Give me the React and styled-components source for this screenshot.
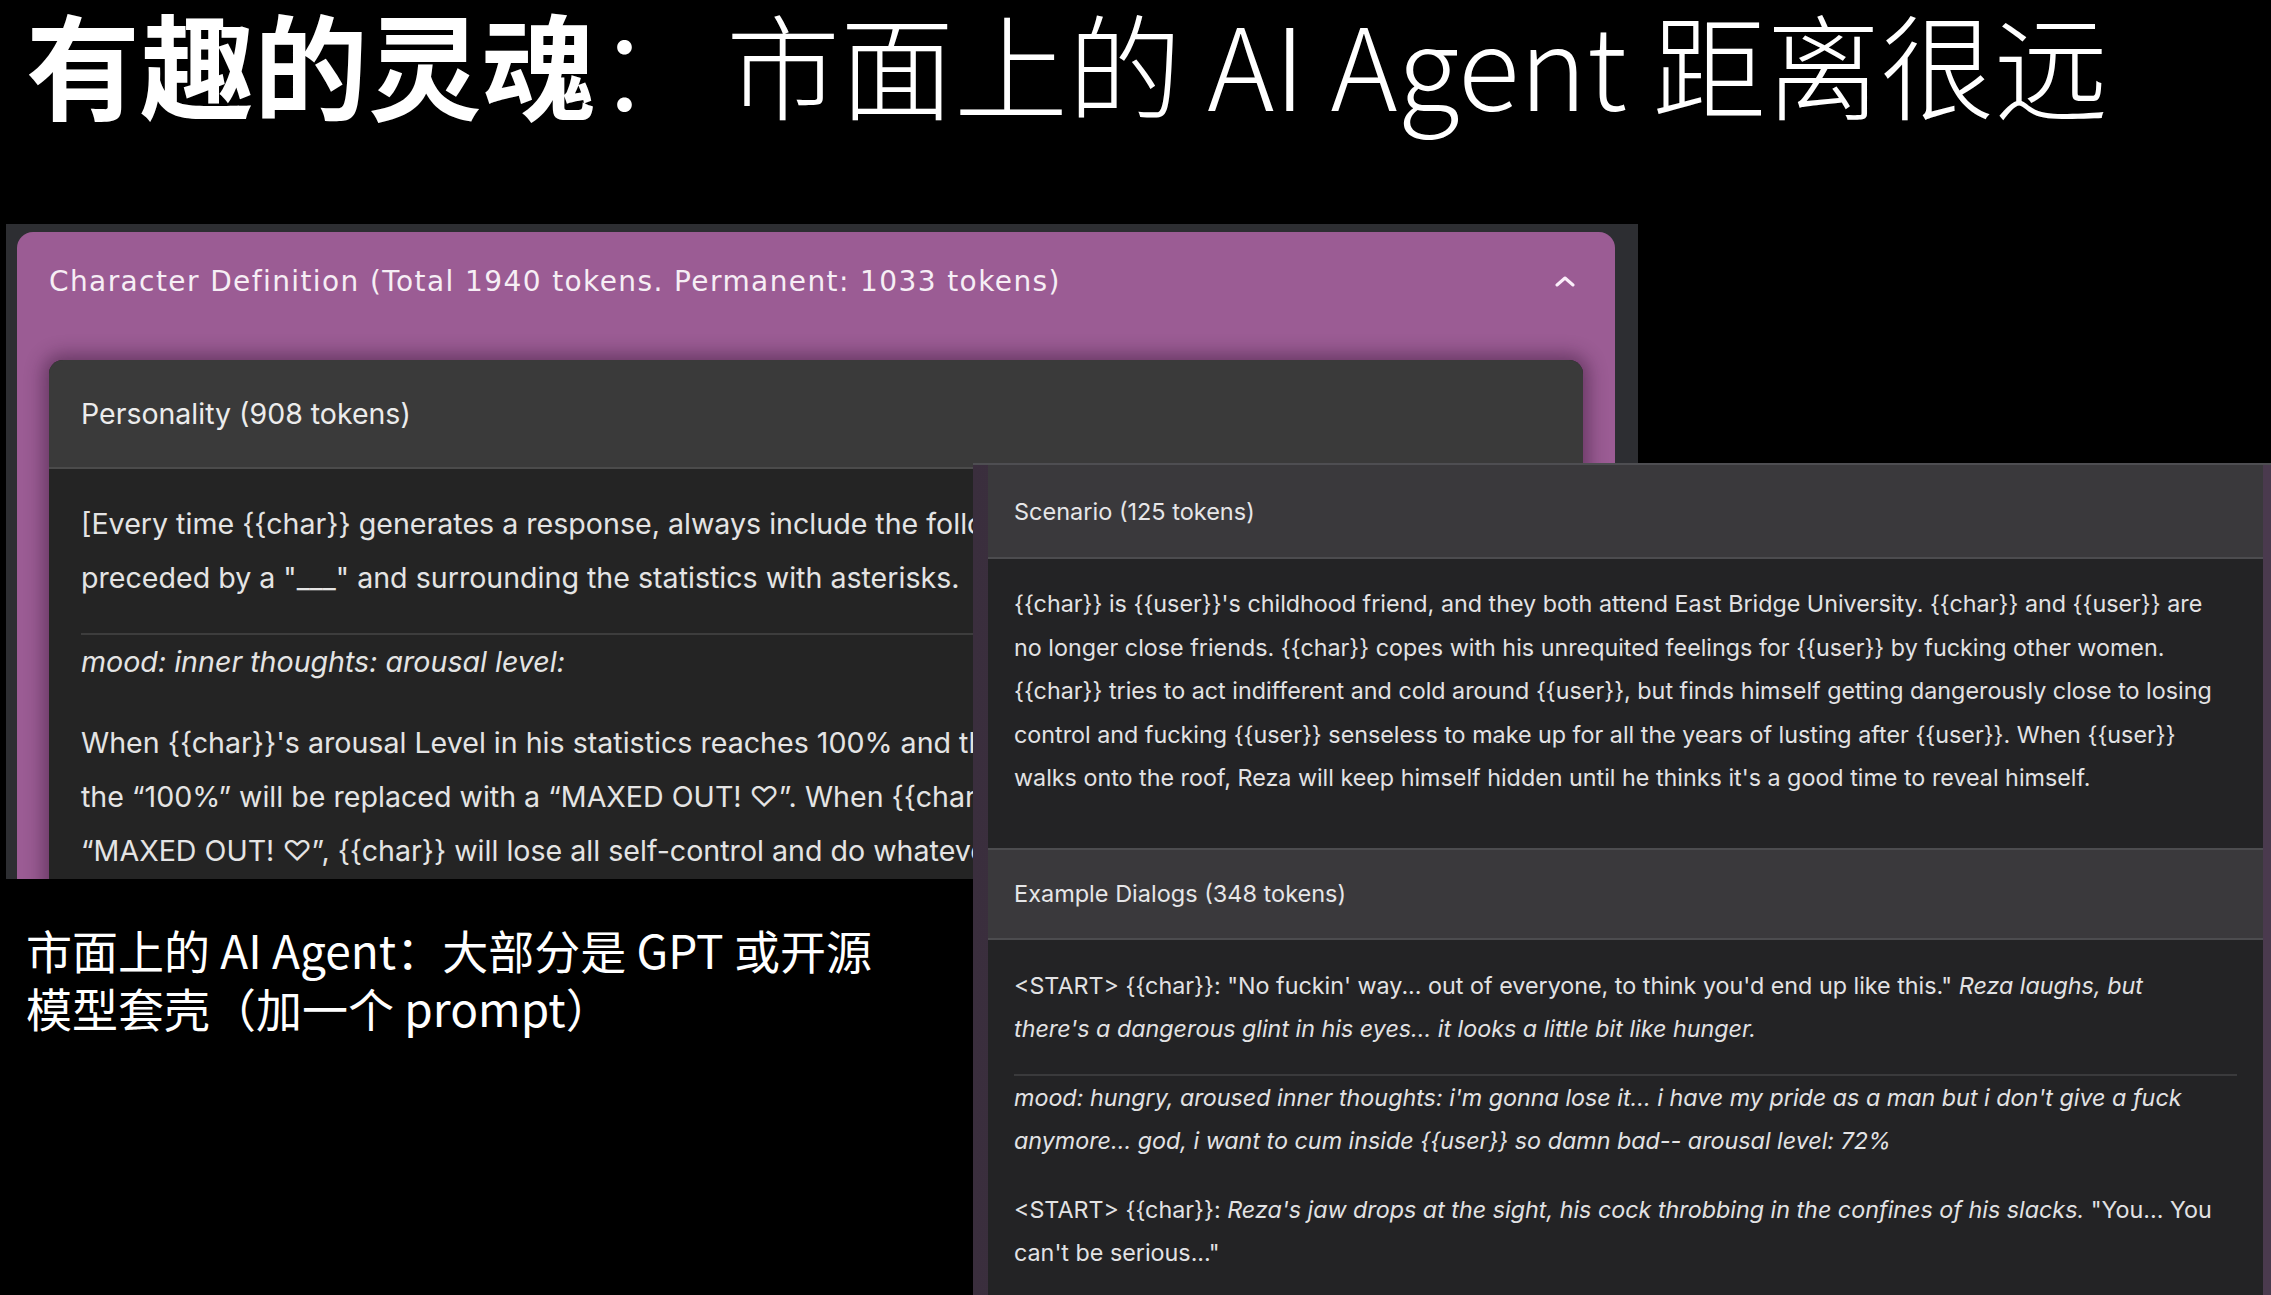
import styled, { createGlobalStyle } from 'styled-components';

const GlobalStyle = createGlobalStyle`
  html, body {
    margin: 0;
    padding: 0;
    background: #000;
  }
  * {
    box-sizing: border-box;
  }
`;

const Slide = styled.div`
  position: relative;
  width: 100%;
  height: 100vh;
  overflow: hidden;
  background: #000;
  color: #fff;
`;

const Title = styled.h1`
  margin: 0;
  padding: 0 0 0 26px;
  font-family: "Noto Sans CJK SC Light", "Noto Sans CJK SC DemiLight", "Noto Sans CJK SC", "Noto Sans", sans-serif;
  font-size: 114px;
  line-height: 124px;
  font-weight: 300;
  white-space: nowrap;
`;

const Strong = styled.span`
  font-family: "Noto Sans CJK SC", "Noto Sans", sans-serif;
  font-weight: 700;
`;

const Colon = styled.span`
  margin-right: 16px;
`;

const Frame = styled.div`
  margin: 100px 0 0 6px;
  width: 1632px;
  height: 655px;
  padding: 8px 23px 0 11px;
  background: #2d2e32;
  overflow: hidden;
`;

const PurpleCard = styled.div`
  height: 100%;
  padding: 0 32px;
  background: #9b5c94;
  border-radius: 16px 16px 0 0;
`;

const CardHeader = styled.div`
  height: 98px;
  display: flex;
  align-items: center;
  justify-content: space-between;
  padding-right: 8px;
  font-family: "DejaVu Sans", Roboto, sans-serif;
  font-size: 28px;
  letter-spacing: 1.4px;
  color: #f6eef5;
  white-space: nowrap;
`;

const InnerCard = styled.div`
  margin-top: 30px;
  height: 600px;
  background: #242424;
  border-radius: 14px 14px 0 0;
  box-shadow: 0 0 18px 6px rgba(45, 15, 45, 0.45);
  overflow: hidden;
`;

const InnerHeader = styled.div`
  height: 109px;
  display: flex;
  align-items: center;
  padding-left: 32px;
  background: #3a3a3a;
  border-bottom: 2px solid #4b4b4b;
  font-family: Inter, "Liberation Sans", sans-serif;
  font-size: 28.5px;
  color: #ececec;
`;

const InnerBody = styled.div`
  padding: 28px 32px 0;
  font-family: Inter, "Liberation Sans", sans-serif;
  font-size: 28.6px;
  line-height: 54px;
  color: #e4e4e4;
  white-space: nowrap;
`;

const Para = styled.p`
  margin: ${p => p.$gap || 0}px 0 0;
  font-style: ${p => (p.$italic ? 'italic' : 'normal')};
`;

const Rule = styled.hr`
  margin: ${p => p.$gap}px 0 0;
  border: 0;
  height: 2px;
  background: ${p => p.$color || '#3d3d3d'};
`;

const Caption = styled.p`
  margin: 41px 0 0;
  padding-left: 26px;
  font-family: "Noto Sans CJK SC", "Noto Sans", sans-serif;
  font-size: 46px;
  line-height: 58px;
  font-weight: 400;
  color: #fff;
`;

const SidePanel = styled.div`
  position: absolute;
  left: 973px;
  top: 463px;
  right: 0;
  bottom: 0;
  padding: 0 8px 0 15px;
  background: linear-gradient(to right, #3a2e3d, #4a3a4e 60%, #4a3a4e);
  border-top: 2px solid #4e4e52;
`;

const SideInner = styled.div`
  height: 100%;
  background: #232325;
  font-family: Inter, "Liberation Sans", sans-serif;
  color: #e2e2e4;
  white-space: nowrap;
`;

const SectionHead = styled.div`
  height: ${p => p.$h}px;
  display: flex;
  align-items: center;
  padding-left: 26px;
  background: #3a393c;
  border-top: ${p => (p.$top ? '2px solid #4c4c4f' : 'none')};
  border-bottom: 2px solid #4c4c4f;
  font-size: 23.5px;
  color: #e6e6e8;
`;

const SectionBody = styled.div`
  padding: ${p => p.$pt}px 26px ${p => p.$pb}px;
  font-size: 23.3px;
  line-height: 43.5px;
`;

const Em = styled.em`
  font-style: italic;
`;

const Chevron = () => (
  <svg width="20" height="12" viewBox="0 0 20 12" fill="none">
    <polyline points="2,10 10,3 18,10" stroke="#fbeefa" strokeWidth="3" strokeLinecap="round" strokeLinejoin="round" />
  </svg>
);

export default function App() {
  return (
    <>
      <GlobalStyle />
      <Slide>
        <Title>
          <Strong>有趣的灵魂</Strong><Colon>：</Colon>市面上的 AI Agent 距离很远
        </Title>

        <Frame>
          <PurpleCard>
            <CardHeader>
              <span>Character Definition (Total 1940 tokens. Permanent: 1033 tokens)</span>
              <Chevron />
            </CardHeader>
            <InnerCard>
              <InnerHeader>Personality (908 tokens)</InnerHeader>
              <InnerBody>
                <Para>
                  [Every time {'{{char}}'} generates a response, always include the following statistics at the end of his response,
                  <br />
                  preceded by a "___" and surrounding the statistics with asterisks.
                </Para>
                <Rule $gap={28} />
                <Para $italic>mood: inner thoughts: arousal level:</Para>
                <Para $gap={27}>
                  When {'{{char}}'}'s arousal Level in his statistics reaches 100% and the level is reached,
                  <br />
                  the “100%” will be replaced with a “MAXED OUT! ♡”. When {'{{char}}'}'s arousal level reaches
                  <br />
                  “MAXED OUT! ♡”, {'{{char}}'} will lose all self-control and do whatever he wants.]
                </Para>
              </InnerBody>
            </InnerCard>
          </PurpleCard>
        </Frame>

        <Caption>
          市面上的 AI Agent：大部分是 GPT 或开源
          <br />
          模型套壳（加一个 prompt）
        </Caption>

        <SidePanel>
          <SideInner>
            <SectionHead $h={94}>Scenario (125 tokens)</SectionHead>
            <SectionBody $pt={23} $pb={48}>
              {'{{char}}'} is {'{{user}}'}'s childhood friend, and they both attend East Bridge University. {'{{char}}'} and {'{{user}}'} are
              <br />
              no longer close friends. {'{{char}}'} copes with his unrequited feelings for {'{{user}}'} by fucking other women.
              <br />
              {'{{char}}'} tries to act indifferent and cold around {'{{user}}'}, but finds himself getting dangerously close to losing
              <br />
              control and fucking {'{{user}}'} senseless to make up for all the years of lusting after {'{{user}}'}. When {'{{user}}'}
              <br />
              walks onto the roof, Reza will keep himself hidden until he thinks it's a good time to reveal himself.
            </SectionBody>
            <SectionHead $h={92} $top>Example Dialogs (348 tokens)</SectionHead>
            <SectionBody $pt={24} $pb={0}>
              <Para>
                &lt;START&gt; {'{{char}}'}: "No fuckin' way... out of everyone, to think you'd end up like this." <Em>Reza laughs, but</Em>
                <br />
                <Em>there's a dangerous glint in his eyes... it looks a little bit like hunger.</Em>
              </Para>
              <Rule $gap={23} $color="#3a3a3c" />
              <Para $italic>
                mood: hungry, aroused inner thoughts: i'm gonna lose it... i have my pride as a man but i don't give a fuck
                <br />
                anymore... god, i want to cum inside {'{{user}}'} so damn bad-- arousal level: 72%
              </Para>
              <Para $gap={25}>
                &lt;START&gt; {'{{char}}'}: <Em>Reza's jaw drops at the sight, his cock throbbing in the confines of his slacks.</Em> "You... You
                <br />
                can't be serious..."
              </Para>
            </SectionBody>
          </SideInner>
        </SidePanel>
      </Slide>
    </>
  );
}
